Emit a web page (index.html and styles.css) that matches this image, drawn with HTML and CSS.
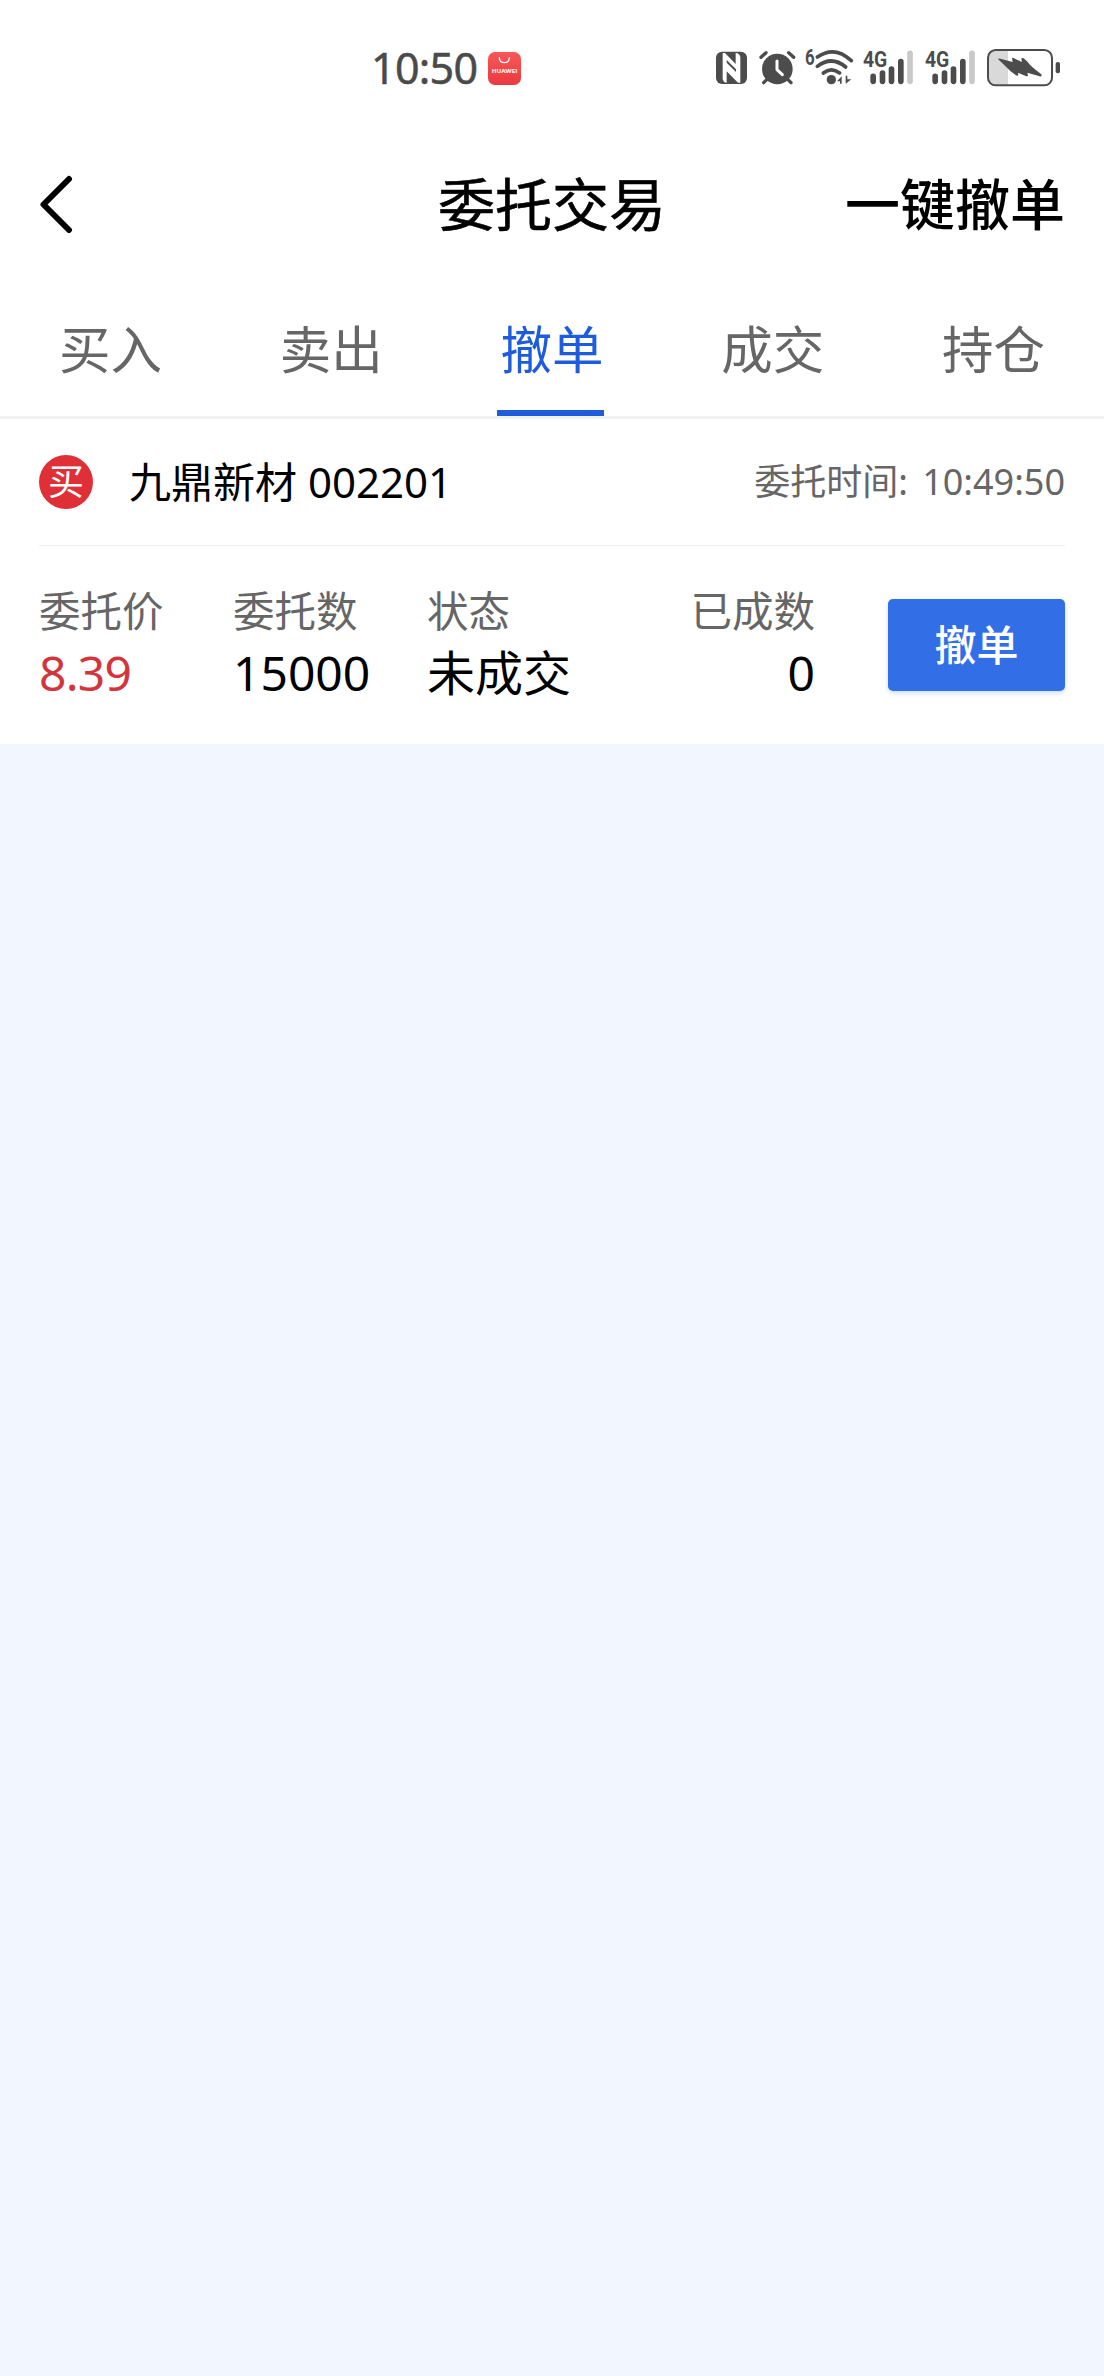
FILE: index.html
```html
<!DOCTYPE html>
<html lang="zh-CN">
<head>
<meta charset="utf-8">
<title>委托交易</title>
<link rel="stylesheet" href="styles.css">
</head>
<body>
<header class="status">
  <span class="clock">10:50</span>
  <svg class="store" viewBox="0 0 99 99" aria-hidden="true">
    <defs><linearGradient id="red" x1="0" y1="0" x2="0" y2="1"><stop offset="0" stop-color="#fb5658"/><stop offset="1" stop-color="#e93a40"/></linearGradient></defs>
    <rect width="99" height="99" rx="21" fill="url(#red)"/>
    <path d="M34 17c1 20 29 20 30 0" fill="none" stroke="#fff" stroke-width="4" stroke-linecap="round"/>
    <text x="11" y="63" textLength="77" lengthAdjust="spacingAndGlyphs" class="brand">HUAWEI</text>
  </svg>
  <svg class="signals" viewBox="0 0 1140 195" aria-hidden="true">
    <!-- NFC -->
    <rect x="48" y="50" width="93" height="97" rx="18"/>
    <path d="M68 54H75L107 87V54Q118 54 121 66V143H114L80 109V143Q70 143 68 132z" fill="#fff"/>
    <path d="M80 83L108 111V103L80 75z"/>
    <!-- alarm -->
    <circle cx="232" cy="102" r="46"/>
    <path d="M183 67L198 53M281 67L266 53M204 130L191 143M260 130L273 143" class="line" stroke-width="10"/>
    <path d="M231 78V104L247 119" fill="none" stroke="#fff" stroke-width="9" stroke-linecap="round" stroke-linejoin="round"/>
    <!-- Wi-Fi -->
    <text x="315" y="90" textLength="29" lengthAdjust="spacingAndGlyphs" class="net">6</text>
    <path d="M352 66Q404 30 454 77M352 94Q395 61 437 96M370 114Q394 95 419 114" class="line" stroke-width="11"/>
    <circle cx="394" cy="134" r="14"/>
    <path d="M411 139L425 124V146H420V139zM454 133L437 146V122H442V133z"/>
    <!-- SIM signals -->
    <g id="sim">
      <text x="489" y="96" textLength="73" lengthAdjust="spacingAndGlyphs" class="net">4G</text>
      <path d="M519.500 124V139M547.500 114V139M574.500 102V139M602.500 80V139" class="line" stroke-width="17"/>
      <path d="M630 55V139" class="line pale" stroke-width="17"/>
    </g>
    <use href="#sim" x="186"/>
    <!-- battery -->
    <path d="M882 47H924V149H882Q865 149 865 130V66Q865 47 882 47z" fill="#d9d9d9"/>
    <rect x="864" y="45" width="192" height="106" rx="23" fill="none" stroke="#4c4c4c" stroke-width="6"/>
    <rect x="1067" y="81" width="13" height="34" rx="6"/>
    <path d="M894 72Q896 69 901 71L938 81 936 70Q937 67 942 70L966 81 964 71Q966 67 971 70L984 82Q987 90 1024 118Q1027 125 1019 124L982 113 984 121Q983 125 977 123L954 113 955 120Q953 124 948 121L931 108z"/>
  </svg>
</header>

<nav class="titlebar">
  <svg class="back" viewBox="0 0 34 58" aria-label="返回"><path d="M30 4L4.500 29.500L30 55"/></svg>
  <h1>委托交易</h1>
  <a class="cancel-all">一键撤单</a>
</nav>

<div class="tabs">
  <a>买入</a><a>卖出</a><a class="active">撤单</a><a>成交</a><a>持仓</a>
</div>

<main class="order">
  <div class="order-head">
    <span class="side">买</span>
    <span class="stock">九鼎新材 002201</span>
    <span class="time">委托时间: <b>10:49:50</b></span>
  </div>
  <div class="order-body">
    <div class="cell"><label>委托价</label><span class="price">8.39</span></div>
    <div class="cell"><label>委托数</label><span>15000</span></div>
    <div class="cell"><label>状态</label><span>未成交</span></div>
    <div class="cell filled"><label>已成数</label><span>0</span></div>
    <button>撤单</button>
  </div>
</main>
</body>
</html>
```
FILE: styles.css
```css
* { box-sizing: border-box; }
body {
  margin: 0;
  min-height: 2376px;
  background: #f2f6ff;
  color: #000;
  font-family: "Noto Sans", "Noto Sans CJK SC", sans-serif;
}
.status {
  display: flex;
  height: 136px;
  padding: 35px 24px 0 371px;
  background: #fff;
}
.clock {
  width: 117px;
  font-size: 43px;
  line-height: 66px;
  letter-spacing: -0.7px;
  color: #4a4a4a;
  -webkit-text-stroke: 0.5px #4a4a4a;
}
.store { width: 33px; height: 33px; margin-top: 17px; }
.brand { font: bold 18px "Open Sans", sans-serif; fill: #fff; }
.signals { width: 380px; height: 65px; margin-left: auto; fill: #4c4c4c; }
.line { fill: none; stroke: #4c4c4c; stroke-linecap: round; }
.pale { stroke: #c9c9c9; }
.net { font: bold 64px Roboto, sans-serif; }

.titlebar {
  display: grid;
  grid-template-columns: 1fr auto 1fr;
  align-items: center;
  height: 138px;
  padding: 0 39px 2px;
  background: #fff;
}
.back { width: 34px; height: 58px; fill: none; stroke: #000; stroke-width: 6; stroke-linecap: round; stroke-linejoin: round; }
h1 { margin: 0; font-size: 57px; font-weight: 400; line-height: 80px; -webkit-text-stroke: 0.6px #000; }
.cancel-all { justify-self: end; font-size: 55px; font-weight: 500; line-height: 80px; }

.tabs {
  display: flex;
  height: 145px;
  background: #fff;
  border-bottom: 3px solid #f2f2f3;
}
.tabs a {
  flex: 1;
  display: flex;
  justify-content: center;
  height: 142px;
  padding-top: 35px;
  font-size: 51.5px;
  line-height: 80px;
  color: #666;
}
.tabs .active { color: #1e5cdc; }
.tabs .active::after {
  content: "";
  align-self: flex-end;
  width: 107px;
  height: 6px;
  margin-left: -107px;
  background: #1e5cdc;
}

.order { height: 325px; padding: 0 39px; background: #fff; }
.order-head {
  display: flex;
  align-items: center;
  height: 127px;
  border-bottom: 1px solid #f0f0f0;
}
.side {
  width: 54px;
  height: 54px;
  border-radius: 50%;
  background: #df3037;
  color: #fff;
  font-size: 36px;
  line-height: 54px;
  text-align: center;
}
.stock { margin-left: 36px; font-size: 42px; line-height: 60px; }
.time { margin-left: auto; font-size: 36px; line-height: 60px; color: #666; }
.time b { margin-left: 5px; font-weight: 400; }

.order-body {
  display: grid;
  grid-template-columns: 194px 194px 194px 194px 1fr;
  padding-top: 35px;
}
.cell { display: flex; flex-direction: column; }
.cell label { font-size: 41.500px; line-height: 60px; color: #666; }
.cell span { font-size: 48px; line-height: 64px; }
.cell .price { color: #d2363c; letter-spacing: -0.8px; }
.filled { text-align: right; }
button {
  justify-self: end;
  width: 177px;
  height: 92px;
  margin-top: 18px;
  padding: 0;
  border: 0;
  border-radius: 5px;
  background: #326ee6;
  box-shadow: 0 2px 5px rgba(50, 110, 230, 0.25);
  color: #fff;
  font: 500 42px/92px "Noto Sans", "Noto Sans CJK SC", sans-serif;
}
```
